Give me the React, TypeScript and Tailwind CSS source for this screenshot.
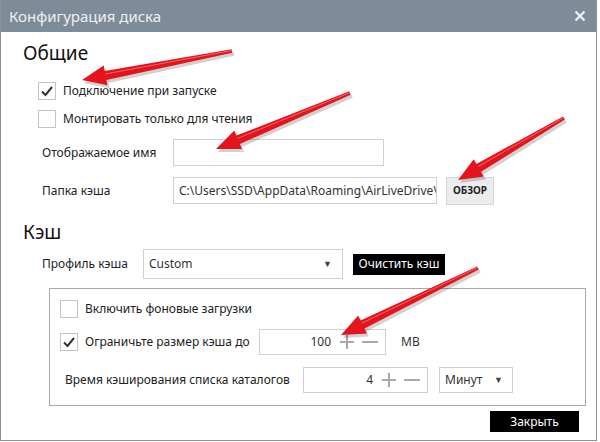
import React from "react";

function Check({ checked }: { checked?: boolean }) {
  return (
    <div className="w-[18px] h-[18px] border border-[#c4c4c4] bg-white flex items-center justify-center shrink-0">
      {checked && (
        <svg width="14" height="14" viewBox="0 0 14 14">
          <path d="M2 7.5 L5.5 11 L12 3" fill="none" stroke="#333" strokeWidth="2" />
        </svg>
      )}
    </div>
  );
}

function Arrow({ x1, y1, x2, y2 }: { x1: number; y1: number; x2: number; y2: number }) {
  const dx = x2 - x1;
  const dy = y2 - y1;
  const len = Math.sqrt(dx * dx + dy * dy);
  const ux = dx / len;
  const uy = dy / len;
  const px = -uy;
  const py = ux;
  const headLen = 24;
  const headW = 10;
  const bx = x2 - ux * headLen;
  const by = y2 - uy * headLen;
  const tw = 1.8;
  const sw = 4.5;
  const pts = [
    [x1 + px * tw, y1 + py * tw],
    [bx + px * sw, by + py * sw],
    [bx + px * headW, by + py * headW],
    [x2, y2],
    [bx - px * headW, by - py * headW],
    [bx - px * sw, by - py * sw],
    [x1 - px * tw, y1 - py * tw],
  ]
    .map((p) => p.map((v) => v.toFixed(1)).join(","))
    .join(" ");
  return (
    <g>
      <polygon points={pts} fill="#000" opacity="0.18" transform="translate(2,3)" />
      <polygon points={pts} fill="#e3141b" />
      <line
        x1={x1 + px * 0.5}
        y1={y1 + py * 0.5}
        x2={bx + px * 1.5}
        y2={by + py * 1.5}
        stroke="#ff8a8a"
        strokeWidth="1"
        opacity="0.7"
      />
    </g>
  );
}

function PlusMinus() {
  return (
    <div className="flex items-center gap-[6px] ml-[8px] mr-[6px]">
      <svg width="16" height="16" viewBox="0 0 16 16">
        <path d="M8 1 V15 M1 8 H15" stroke="#a9a9a9" strokeWidth="2" />
      </svg>
      <svg width="18" height="16" viewBox="0 0 18 16">
        <path d="M1 8 H17" stroke="#a9a9a9" strokeWidth="2" />
      </svg>
    </div>
  );
}

export default function App() {
  return (
    <div
      className="relative w-[600px] h-[442px] bg-white overflow-hidden text-[#222] whitespace-nowrap"
      style={{ fontFamily: '"Noto Sans", "Open Sans", sans-serif' }}
    >
      <div className="w-[597px] h-[441px] border-l border-r border-b border-[#8f8f8f] flex flex-col">
        <div className="h-[32px] bg-[#7e8b98] flex items-center justify-between pl-[8px] pr-[10px] shrink-0">
          <span className="text-[15px] text-[#eef1f4]">Конфигурация диска</span>
          <svg width="12" height="12" viewBox="0 0 12 12">
            <path d="M1.5 1.5 L10.5 10.5 M10.5 1.5 L1.5 10.5" stroke="#eef1f4" strokeWidth="2.4" />
          </svg>
        </div>

        <div className="flex flex-col pl-[22px]">
          <div className="mt-[9px] h-[24px] leading-[24px] text-[19px] text-[#111]">Общие</div>

          <div className="mt-[17px] h-[18px] ml-[15px] flex items-center gap-[7px]">
            <Check checked />
            <span className="text-[12px]">Подключение при запуске</span>
          </div>
          <div className="mt-[10px] h-[18px] ml-[15px] flex items-center gap-[7px]">
            <Check />
            <span className="text-[12px]">Монтировать только для чтения</span>
          </div>

          <div className="mt-[11px] h-[27px] ml-[19px] flex items-center">
            <span className="w-[131px] text-[12px]">Отображаемое имя</span>
            <div className="w-[211px] h-[27px] border border-[#d0d0d0]" />
          </div>
          <div className="mt-[11px] h-[27px] ml-[19px] flex items-center">
            <span className="w-[131px] text-[12px]">Папка кэша</span>
            <div className="w-[264px] h-[27px] border border-[#d0d0d0] flex items-center pl-[5px] overflow-hidden text-[12px] text-[#333]">
              C:\Users\SSD\AppData\Roaming\AirLiveDrive\
            </div>
            <div className="ml-[9px] w-[48px] h-[28px] bg-[#ececec] border border-[#d6d6d6] flex items-center justify-center text-[10px] font-bold text-[#222]">
              ОБЗОР
            </div>
          </div>

          <div className="mt-[16px] h-[24px] leading-[24px] text-[19px] text-[#111]">Кэш</div>

          <div className="mt-[5px] h-[30px] ml-[19px] flex items-center">
            <span className="w-[101px] text-[12px]">Профиль кэша</span>
            <div className="w-[200px] h-[30px] border border-[#d0d0d0] flex items-center justify-between pl-[5px] pr-[10px] text-[12px] text-[#333]">
              <span>Custom</span>
              <span className="text-[9px] text-[#444]">▼</span>
            </div>
            <div className="ml-[10px] w-[92px] h-[21px] bg-black text-white text-[12px] flex items-center justify-center">
              Очистить кэш
            </div>
          </div>

          <div className="mt-[9px] ml-[26px] w-[537px] h-[118px] border border-[#a8a8a8] flex flex-col pl-[10px]">
            <div className="mt-[11px] h-[18px] flex items-center gap-[7px]">
              <Check />
              <span className="text-[12px]">Включить фоновые загрузки</span>
            </div>
            <div className="mt-[11px] h-[26px] flex items-center">
              <Check checked />
              <span className="ml-[7px] w-[174px] text-[12px]">Ограничьте размер кэша до</span>
              <div className="w-[127px] h-[26px] border border-[#d0d0d0] flex items-center justify-end text-[12px] text-[#333]">
                <span>100</span>
                <PlusMinus />
              </div>
              <span className="ml-[15px] text-[12px] text-[#333]">MB</span>
            </div>
            <div className="mt-[12px] h-[26px] flex items-center">
              <span className="ml-[5px] w-[238px] text-[12px]">Время кэширования списка каталогов</span>
              <div className="w-[125px] h-[26px] border border-[#d0d0d0] flex items-center justify-end text-[12px] text-[#333]">
                <span>4</span>
                <PlusMinus />
              </div>
              <div className="ml-[11px] w-[74px] h-[26px] border border-[#d0d0d0] flex items-center justify-between pl-[5px] pr-[9px] text-[12px] text-[#333]">
                <span>Минут</span>
                <span className="text-[9px] text-[#444]">▼</span>
              </div>
            </div>
          </div>

          <div className="mt-[5px] ml-[467px] w-[89px] h-[21px] bg-black text-white text-[12px] flex items-center justify-center">
            Закрыть
          </div>
        </div>
      </div>

      <svg className="absolute left-0 top-0 pointer-events-none" width="600" height="442">
        <Arrow x1={232} y1={51} x2={82} y2={80} />
        <Arrow x1={350} y1={93} x2={216} y2={149} />
        <Arrow x1={564} y1={118} x2={458} y2={180} />
        <Arrow x1={478} y1={268} x2={341} y2={335} />
      </svg>
    </div>
  );
}
